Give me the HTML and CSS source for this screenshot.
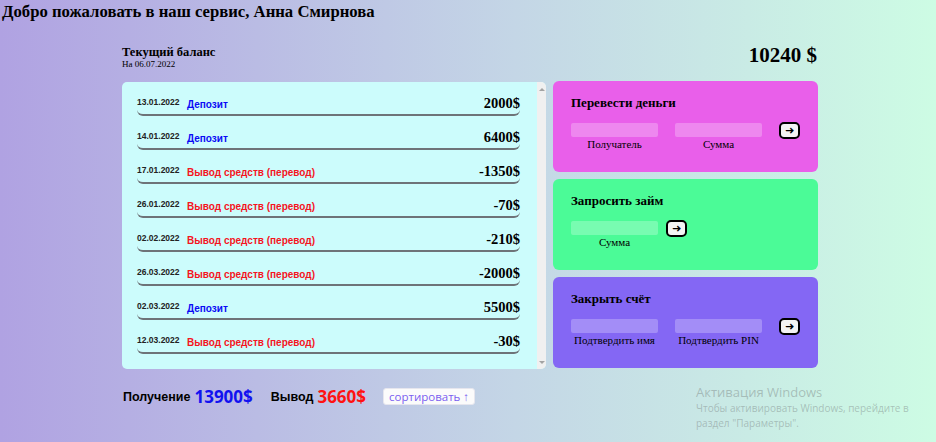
FILE: index.html
```html
<!DOCTYPE html>
<html lang="ru">
<head>
<meta charset="utf-8">
<link rel="stylesheet" href="styles.css">
</head>
<body>
<h1 class="welcome">Добро пожаловать в наш сервис, Анна Смирнова</h1>
<main class="app">
  <div class="balance">
    <div>
      <div class="balance-label">Текущий баланс</div>
      <div class="balance-date">На 06.07.2022</div>
    </div>
    <div class="balance-value">10240 $</div>
  </div>
  <div class="grid">
    <div class="movements">
      <div class="list">
        <div class="row"><span class="date">13.01.2022</span><span class="type dep">Депозит</span><span class="amount">2000$</span></div>
        <div class="row"><span class="date">14.01.2022</span><span class="type dep">Депозит</span><span class="amount">6400$</span></div>
        <div class="row"><span class="date">17.01.2022</span><span class="type wd">Вывод средств (перевод)</span><span class="amount">-1350$</span></div>
        <div class="row"><span class="date">26.01.2022</span><span class="type wd">Вывод средств (перевод)</span><span class="amount">-70$</span></div>
        <div class="row"><span class="date">02.02.2022</span><span class="type wd">Вывод средств (перевод)</span><span class="amount">-210$</span></div>
        <div class="row"><span class="date">26.03.2022</span><span class="type wd">Вывод средств (перевод)</span><span class="amount">-2000$</span></div>
        <div class="row"><span class="date">02.03.2022</span><span class="type dep">Депозит</span><span class="amount">5500$</span></div>
        <div class="row"><span class="date">12.03.2022</span><span class="type wd">Вывод средств (перевод)</span><span class="amount">-30$</span></div>
      </div>
      <div class="scrollbar"><span class="arrow up"></span><span class="arrow down"></span></div>
    </div>
    <div class="ops">
      <form class="op op-transfer">
        <h2 class="op-title">Перевести деньги</h2>
        <div class="fields">
          <label class="field"><input class="inp" type="text"><span>Получатель</span></label>
          <label class="field"><input class="inp" type="text"><span>Сумма</span></label>
          <button class="go" type="button">&#10140;</button>
        </div>
      </form>
      <form class="op op-loan">
        <h2 class="op-title">Запросить займ</h2>
        <div class="fields">
          <label class="field"><input class="inp" type="text"><span>Сумма</span></label>
          <button class="go go-near" type="button">&#10140;</button>
        </div>
      </form>
      <form class="op op-close">
        <h2 class="op-title">Закрыть счёт</h2>
        <div class="fields">
          <label class="field"><input class="inp" type="text"><span>Подтвердить имя</span></label>
          <label class="field"><input class="inp" type="text"><span>Подтвердить PIN</span></label>
          <button class="go" type="button">&#10140;</button>
        </div>
      </form>
    </div>
  </div>
  <div class="summary">
    <span class="sum-label">Получение</span><span class="sum-val in">13900$</span>
    <span class="sum-label">Вывод</span><span class="sum-val out">3660$</span>
    <button class="sort" type="button">сортировать &#8593;</button>
  </div>
</main>
<div class="watermark">
  <div class="wm-title">Активация Windows</div>
  <div class="wm-text">Чтобы активировать Windows, перейдите в<br>раздел "Параметры".</div>
</div>
</body>
</html>
```
FILE: styles.css
```css
html, body { margin: 0; padding: 0; }
body {
  width: 936px;
  height: 442px;
  overflow: hidden;
  background: linear-gradient(to right, #b0a2e2 0%, #c4d6e6 55%, #cdfce4 100%);
  font-family: "Liberation Serif", serif;
  color: #000;
  position: relative;
}
.welcome {
  margin: 0;
  padding: 2px 0 0 2px;
  font-size: 16.7px;
  font-weight: bold;
  line-height: 20px;
}
.app {
  width: 696px;
  margin: 20px 0 0 122px;
}
.balance {
  display: flex;
  justify-content: space-between;
  align-items: center;
  height: 30px;
  margin-bottom: 10px;
}
.balance-label { font-size: 12.5px; font-weight: bold; line-height: 13px; margin-top: 1px; }
.balance-date { font-size: 9px; line-height: 10px; }
.balance-value { font-size: 21px; font-weight: bold; margin-right: 1px; margin-top: -4px; }
.grid {
  display: grid;
  grid-template-columns: 424px 265px;
  column-gap: 7px;
  height: 287px;
}
.movements {
  display: flex;
  background: #ccfcfc;
  border-radius: 5px;
  overflow: hidden;
}
.list { flex: 1; padding: 0 17px 0 15px; }
.row {
  display: flex;
  align-items: flex-start;
  height: 34px;
  padding-top: 14px;
  border-bottom: 2px solid #6e7378;
  border-radius: 0 0 6px 6px;
  box-sizing: border-box;
}
.date {
  font-family: "Liberation Sans", Arial, sans-serif;
  font-weight: bold;
  font-size: 8.5px;
  line-height: 10px;
  color: #222;
  margin-top: 1px;
  width: 50px;
}
.type {
  font-family: "Liberation Sans", Arial, sans-serif;
  font-weight: bold;
  font-size: 10px;
  line-height: 12px;
  margin-top: 3px;
  flex: 1;
}
.dep { color: #0a0af5; }
.wd { color: #f5141e; }
.amount {
  font-size: 14.5px;
  line-height: 17px;
  font-weight: bold;
  margin-top: -1px;
}
.scrollbar {
  width: 9px;
  background: #f0f0f0;
  display: flex;
  flex-direction: column;
  justify-content: space-between;
  align-items: center;
  padding: 6px 0 5px;
  box-sizing: border-box;
}
.arrow { width: 0; height: 0; border-left: 3px solid transparent; border-right: 3px solid transparent; }
.arrow.up { border-bottom: 3px solid #a3a3a3; }
.arrow.down { border-top: 3px solid #a3a3a3; }
.ops { display: flex; flex-direction: column; gap: 7px; margin-top: -1px; }
.op {
  margin: 0;
  border-radius: 6px;
  padding: 14px 18px 0;
  height: 91px;
  box-sizing: border-box;
}
.op-transfer { background: #e95fea; }
.op-loan { background: #4bfb97; }
.op-close { background: #8467f4; }
.op-title { margin: 0 0 13px; font-size: 13px; line-height: 15px; font-weight: bold; }
.fields { display: flex; align-items: flex-start; }
.field { display: flex; flex-direction: column; align-items: center; width: 87px; margin-right: 17px; }
.field span { font-size: 11px; line-height: 13px; margin-top: 1px; }
.inp {
  width: 87px;
  height: 14px;
  box-sizing: border-box;
  border: none;
  border-radius: 2px;
  background: rgba(255,255,255,0.25);
  padding: 0;
  outline: none;
}
.go {
  width: 21px;
  height: 17px;
  margin-top: -1px;
  padding: 0;
  border: 2px solid #000;
  border-radius: 5px;
  background: #f4f4f4;
  font-size: 11px;
  line-height: 12px;
  font-weight: bold;
  color: #000;
  font-family: "DejaVu Sans", sans-serif;
}
.go-near { margin-left: -9px; }
.summary {
  display: flex;
  align-items: center;
  margin-top: 16px;
  padding-left: 1px;
  font-family: "Liberation Sans", Arial, sans-serif;
  font-weight: bold;
}
.sum-label { font-size: 12.5px; margin-right: 4px; }
.sum-val { font-size: 17px; font-family: "Open Sans", sans-serif; font-weight: 700; }
.in { color: #1212f0; margin-right: 18px; }
.out { color: #ff1212; margin-right: 17px; }
.sort {
  font-family: "Open Sans", sans-serif;
  font-size: 11.5px;
  font-weight: normal;
  color: #7a5ef0;
  background: #fbfbfb;
  border: 1px solid #e6e6ee;
  border-radius: 3px;
  padding: 0 5px;
  height: 17px;
  line-height: 15px;
}
.watermark {
  position: absolute;
  left: 696px;
  top: 384px;
  font-family: "Open Sans", "Noto Sans", sans-serif;
  color: rgba(120,130,130,0.45);
}
.wm-title { font-size: 13px; line-height: 17px; }
.wm-text { font-size: 10px; line-height: 15px; }
```
